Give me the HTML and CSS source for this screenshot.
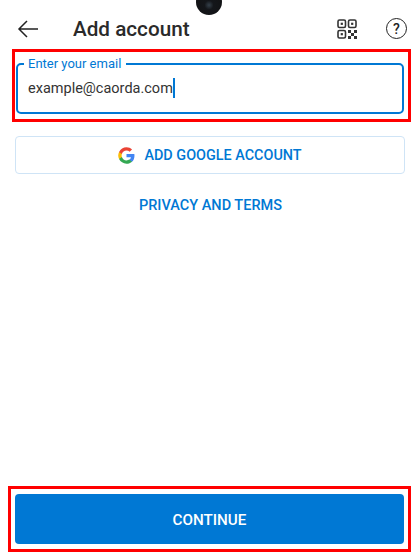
FILE: index.html
```html
<!DOCTYPE html>
<html lang="en">
<head>
  <meta charset="UTF-8">
  <meta name="viewport" content="width=device-width, initial-scale=1.0">
  <title>Add account</title>
  <link rel="stylesheet" href="styles.css">
</head>
<body>
  <div class="camera"></div>
  <div class="page">
    <header class="topbar">
      <button class="icon-btn back" aria-label="Back">
        <svg width="22" height="18" viewBox="0 0 22 18" fill="none" stroke="#222" stroke-width="1.5"><path d="M21 9H2M10 1L2 9l8 8"/></svg>
      </button>
      <h1 class="title">Add account</h1>
      <button class="icon-btn qr" aria-label="Scan QR code">
        <svg width="20" height="20" viewBox="0 0 20 20" fill="none" stroke="#333" stroke-width="1.6">
          <rect x="1" y="1" width="7.5" height="7.5" rx="1.5"/>
          <rect x="11.5" y="1" width="7.5" height="7.5" rx="1.5"/>
          <rect x="1" y="11.500" width="7.5" height="7.5" rx="1.5"/>
          <g fill="#333" stroke="none">
            <rect x="3.700" y="3.700" width="2.200" height="2.200"/>
            <rect x="14.100" y="3.700" width="2.200" height="2.200"/>
            <rect x="3.700" y="14.100" width="2.200" height="2.200"/>
            <path d="M11 11h3v3h-3zM17 11h3v3h-3zM14 14h3v3h-3zM11 17h3v3h-3zM17 17h3v3h-3z"/>
          </g>
        </svg>
      </button>
      <button class="icon-btn help" aria-label="Help">?</button>
    </header>

    <div class="marked marked-email">
      <fieldset class="email-field">
        <legend>Enter your email</legend>
        <span class="email-value">example@caorda.com</span><span class="caret"></span>
      </fieldset>
    </div>

    <button class="google-btn">
      <svg width="17" height="17" viewBox="0 0 48 48">
        <path fill="#4285F4" d="M46.500 24.500c0-1.600-.1-3.100-.4-4.500H24v9h12.700c-.6 2.900-2.200 5.400-4.700 7v5.800h7.600c4.400-4.100 6.900-10.100 6.900-17.300z"/>
        <path fill="#34A853" d="M24 47c6.300 0 11.600-2.100 15.600-5.700L32 35.500c-2.100 1.400-4.800 2.300-8 2.300-6.100 0-11.300-4.100-13.100-9.700H3v6C7 42 15 47 24 47z"/>
        <path fill="#FBBC05" d="M10.900 28.100c-.5-1.400-.7-2.900-.7-4.100s.3-2.700.7-4.100v-6H3C1.500 17 .6 20.400.6 24s.9 7 2.400 10.100l7.900-6z"/>
        <path fill="#EA4335" d="M24 10.200c3.400 0 6.500 1.200 8.900 3.500l6.700-6.700C35.600 3.200 30.300 1 24 1 15 1 7 6 3 13.900l7.900 6c1.800-5.600 7-9.700 13.100-9.700z"/>
      </svg>
      <span>ADD GOOGLE ACCOUNT</span>
    </button>

    <a class="privacy" href="#">PRIVACY AND TERMS</a>

    <div class="spacer"></div>

    <div class="marked marked-continue">
      <button class="continue-btn">CONTINUE</button>
    </div>
  </div>
</body>
</html>
```

FILE: styles.css
```css
* {
  box-sizing: border-box;
}

html, body {
  height: 100%;
}

body {
  margin: 0;
  background-color: #ffffff;
  color: #222222;
  font-family: Roboto, "Liberation Sans", sans-serif;
  overflow: hidden;
}

button {
  font-family: inherit;
  cursor: pointer;
}

.camera {
  position: absolute;
  left: 196px;
  top: -11px;
  width: 26px;
  height: 26px;
  border-radius: 50%;
  background: radial-gradient(circle at 50% 62%, #35404a 0, #14161a 22%, #111111 100%);
}

.page {
  display: flex;
  flex-direction: column;
  height: 560px;
  padding: 0 8px 8px;
}

.topbar {
  display: flex;
  align-items: center;
  height: 49px;
  padding: 8px 0 0 9px;
}

.icon-btn {
  display: flex;
  align-items: center;
  justify-content: center;
  padding: 0;
  border: none;
  background: none;
}

.title {
  margin: 0 0 0 34px;
  flex: 1;
  font-size: 20.7px;
  font-weight: 500;
  color: #2a2a2a;
}

.qr {
  margin-right: 29px;
}

.help {
  width: 21px;
  height: 21px;
  margin-right: 5px;
  border: 1.5px solid #222222;
  border-radius: 50%;
  font-size: 14px;
  font-weight: 500;
  color: #222222;
}

.marked {
  border: 3px solid #ff0000;
}

.marked-email {
  margin-left: 4px;
  width: 399px;
  height: 73px;
  padding: 5px 4px 5px 1px;
}

.email-field {
  display: block;
  height: 57px;
  margin: 0;
  padding: 0 10px;
  border: 2px solid #0078d4;
  border-radius: 5px;
  font-size: 14.5px;
  line-height: 24px;
}

.email-field legend {
  padding: 0 5px 0 4px;
  margin-left: -4px;
  font-size: 13px;
  line-height: 13px;
  color: #0078d4;
}

.email-value {
  display: inline-block;
  margin-top: 7px;
  vertical-align: top;
  color: #333333;
}

.caret {
  display: inline-block;
  width: 2px;
  height: 20px;
  margin-top: 8px;
  vertical-align: top;
  background-color: #0078d4;
}

.google-btn {
  display: flex;
  align-items: center;
  justify-content: center;
  gap: 9px;
  width: 390px;
  height: 38px;
  margin: 14px 0 0 7px;
  padding: 1px 0 0;
  border: 1.5px solid #cfe4f6;
  border-radius: 4px;
  background-color: #ffffff;
  color: #0078d4;
  font-size: 14.4px;
  font-weight: 500;
}

.privacy {
  align-self: center;
  margin: 24px 0 0 1px;
  color: #0078d4;
  font-size: 14.5px;
  font-weight: 500;
  line-height: 16px;
  text-decoration: none;
}

.spacer {
  flex: 1;
}

.marked-continue {
  width: 403px;
  height: 66px;
  padding: 5px 4px 5px 4px;
}

.continue-btn {
  display: block;
  width: 100%;
  height: 50px;
  padding: 1px 0 0;
  border: none;
  border-radius: 4px;
  background-color: #0078d4;
  color: #ffffff;
  font-size: 15.2px;
  font-weight: 500;
}
```
